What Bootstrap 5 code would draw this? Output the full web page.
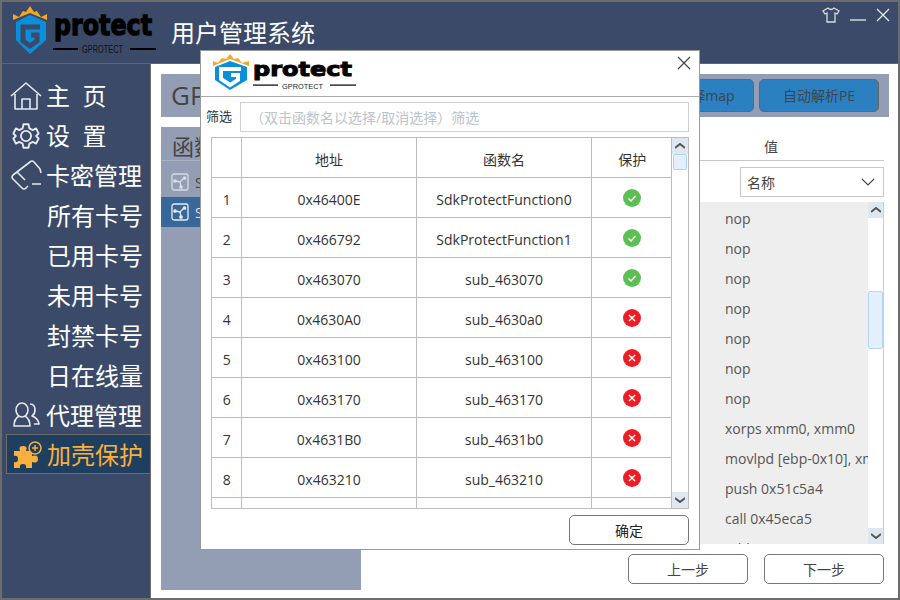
<!DOCTYPE html>
<html lang="zh">
<head>
<meta charset="utf-8">
<title>用户管理系统</title>
<link href="https://cdn.jsdelivr.net/npm/bootstrap@5.3.0/dist/css/bootstrap.min.css" rel="stylesheet">
<style>
html,body{height:100%;margin:0;overflow:hidden}
body{font-family:"Open Sans","Noto Sans CJK SC",sans-serif;background:#fff;color:#333}
.app-win{width:900px;height:600px;border:2px solid #6c6c6c;position:relative;background:#fff;overflow:hidden}
.top-bar{height:62px;background:#3a4a68;border-bottom:1px solid #5f6572;flex:none}
.brand-box{width:160px;margin-left:10px;align-self:flex-start}
.app-title{font-size:24px;color:#fff;line-height:1;margin-left:-1px}
.win-tools{margin-left:auto;padding:4px 8px 0 0;gap:10px;align-self:flex-start}
.side-nav{width:149px;background:#3a4a68;border-right:1px solid #6c6c6c;padding-top:12px;flex:none}
.nav-row{height:40px;font-size:24px;line-height:40px;color:#fff;padding-left:8px;white-space:nowrap}
.nav-row svg{flex:none;width:32px;height:32px;margin-right:4px}
.nav-row.sub-row{padding-left:45px}
.nav-row.live-row{color:#fbb03b;background:#1f3f60;border:1px solid #6c6c6c;border-right:0;margin:-2px 0 0 4px;padding-left:3px;padding-top:1px;line-height:38px}
.nav-row.live-row svg{margin-right:5px}
.main-zone{padding:10px 9px 8px 10px;min-width:0}
.head-strip{height:43px;background:#939eb5;padding:0 10px;font-size:26px;color:#444;flex:none;justify-content:space-between}
.head-strip .btn{height:33px;width:120px;padding:0;background:#2a80c0;border:1px solid #666;border-radius:5px;font-size:14px;color:#3c4650}
.head-strip .btn.narrow-btn{width:96px}
.strip-btns{gap:5px}
.lower-zone{margin-top:10px;min-height:0}
.fn-panel{width:200px;background:#939eb5;flex:none;height:463px}
.fn-head{height:34px;font-size:22px;line-height:38px;color:#444;padding-left:11px;border-bottom:1px solid #aab2c4}
.fn-item{height:30px;font-size:14px;padding-left:10px;color:#444}
.fn-item.first-item{margin-top:6px;height:30px}
.fn-item.on{background:#38689a;color:#dde}
.fn-item svg{width:18px;height:18px;margin-right:6px}
.val-col{margin-left:auto;width:256px;margin-right:5px}
.val-head{height:34px;line-height:39px;text-align:center;font-size:14px;color:#444;border-bottom:1px solid #c8c8c8;padding-left:30px}
.val-select{width:144px;height:30px;margin:6px 0 5px auto;padding:0 0 0 6px;border:1px solid #c8c8c8;border-radius:0;font-size:14px;color:#444;font-family:inherit;background-image:url("data:image/svg+xml,%3Csvg xmlns='http://www.w3.org/2000/svg' viewBox='0 0 14 8'%3E%3Cpath d='M1 1 L7 7 L13 1' fill='none' stroke='%23444' stroke-width='1.1'/%3E%3C/svg%3E");background-size:14px 8px;background-position:right 8px center}
.code-box{height:342px;background:#eee;overflow:hidden}
.code-rows{padding-left:97px;font-size:14px;color:#555;line-height:30px;margin:2px 0 0;list-style:none;white-space:nowrap;overflow:hidden}
.bar-v{width:16px;background:#fff;flex:none}
.code-box .bar-v{border-right:1px solid #ccc}
.bar-arrow{height:16px;background:#dfe8f0;color:#555;flex:none}
.bar-arrow svg{width:10px;height:6px}
.bar-track{min-height:0}
.code-box .bar-thumb{height:58px;margin-top:73px;background:#e3f0fb;border:1px solid #b3d7f5;border-radius:2px}
.step-row{margin-top:10px;gap:16px}
.step-row .btn{width:120px;height:30px;padding:0;border:1px solid #777;border-radius:5px;font-size:14px;color:#444;background:#fff}
.dlg{position:absolute;left:198px;top:48px;width:500px;height:500px;background:#fff;border:1px solid #999;z-index:5}
.dlg-head{height:46px;border-bottom:1px solid #aaa;padding-left:12px;position:relative}
.dlg-head svg.dlg-logo{align-self:flex-start;margin-top:3px}
.dlg-x{position:absolute;top:5px;right:8px;padding:0;border:0;background:none;line-height:0}
.filter-row{height:30px;margin:5px 10px 0 5px;font-size:13px;color:#333}
.filter-row .form-control{height:30px;margin-left:8px;border:1px solid #d0d0d0;border-radius:0;padding:0 0 0 9px;font-size:14px;font-family:inherit}
.filter-row .form-control::placeholder{color:#bcc3cc}
.grid-box{height:372px;margin:5px 10px 0 10px;border:1px solid #bdbdbd;overflow:hidden}
.grid-wrap{overflow:hidden;min-width:0}
.fn-table{table-layout:fixed;width:460px;margin:-1px 0 0;font-size:14px;border-color:#bdbdbd;color:#333}
.fn-table td,.fn-table th{height:40px;padding:5px 0 0 1px;text-align:center;vertical-align:middle;font-weight:400;border-color:#bdbdbd;border-width:0 1px 1px 0;color:#333}
.fn-table tr>*:last-child{border-right-width:0}
.mark-dot{width:18px;height:18px;display:block;margin:-4px auto 0}
.dlg .bar-thumb{height:16px;background:#e3f0fb;border:1px solid #a9d2f4;border-radius:2px;margin:0 1px}
.dlg .bar-v{border-left:1px solid #bdbdbd;width:17px}
.dlg-foot{margin:6px 10px 0 0}
.dlg-foot .btn{width:120px;height:30px;padding:1px 0 0;border:1px solid #777;border-radius:5px;font-size:14px;color:#222;background:#fff}
.logo-word{font-family:"DejaVu Sans",sans-serif;font-weight:700}
.logo-sub{font-family:"Liberation Sans",sans-serif}
</style>
</head>
<body>
<div class="app-win d-flex flex-column">
  <div class="top-bar d-flex align-items-center">
    <div class="brand-box">
      <svg width="150" height="60" viewBox="12 2 150 60" class="d-block">
        <path d="M13 14 L19 17 L23 11 L26 12 L30 6 L34 12 L37 11 L41 17 L47 14 L47 20 L30 13 L13 20 Z" fill="#f7a823"/>
        <path d="M16 22 L30 15 L46 22 L46 40 L30 54 L16 40 Z" fill="#0a8fdc"/>
        <path d="M40 27 L23 27 L23 41 L30 46 L37 41 L37 35 L31 35" fill="none" stroke="#3a4a68" stroke-width="5"/>
        <text x="54" y="35" class="logo-word" font-size="29" textLength="98" lengthAdjust="spacingAndGlyphs" fill="#000" stroke="#000" stroke-width="1.3">protect</text>
        <rect x="53" y="48" width="25" height="2" fill="#000"/>
        <text x="82" y="53" class="logo-sub" font-size="10" textLength="41" lengthAdjust="spacingAndGlyphs" fill="#111">GPROTECT</text>
        <rect x="130" y="48" width="26" height="2" fill="#000"/>
      </svg>
    </div>
    <div class="app-title">用户管理系统</div>
    <div class="win-tools d-flex align-items-center">
      <svg width="18" height="18" viewBox="0 0 18 18" fill="none" stroke="#d5dae3" stroke-width="1.3"><path d="M6 2 L1 5 L3 8 L5 7 L5 16 L13 16 L13 7 L15 8 L17 5 L12 2 Q9 5 6 2 Z"/></svg>
      <svg width="16" height="16" viewBox="0 0 16 16" stroke="#e8ebf0" stroke-width="1.3"><path d="M0 13 H16"/></svg>
      <svg width="14" height="14" viewBox="0 0 14 14" stroke="#e8ebf0" stroke-width="1.3"><path d="M1 1 L13 13 M13 1 L1 13"/></svg>
    </div>
  </div>
  <div class="d-flex flex-grow-1 overflow-hidden">
    <nav class="side-nav">
      <div class="nav-row d-flex align-items-center">
        <svg viewBox="0 0 32 32" fill="none" stroke="#e6e9ef" stroke-width="1.6"><path d="M1 16 L16 3 L31 16 M5 14 V29 H27 V14 M12 29 V19 H20 V29" stroke-linejoin="round"/></svg>主&nbsp;&nbsp;页</div>
      <div class="nav-row d-flex align-items-center">
        <svg viewBox="-3 -3 38 38" fill="none" stroke="#e6e9ef" stroke-width="2.2"><circle cx="16" cy="16" r="6"/><path d="M13 2 H19 L20 7 L24 9 L28 7 L31 13 L28 16 L31 19 L28 25 L24 23 L20 25 L19 30 H13 L12 25 L8 23 L4 25 L1 19 L4 16 L1 13 L4 7 L8 9 L12 7 Z" stroke-linejoin="round"/></svg>设&nbsp;&nbsp;置</div>
      <div class="nav-row d-flex align-items-center">
        <svg viewBox="0 0 32 32" fill="none" stroke="#e6e9ef" stroke-width="1.6" stroke-linejoin="round"><path d="M31 13 L30 9 L24 2 Q22 0 20 2 L3 15 Q1 17 3 19 L12 28 Q14 30 16 28 L18 26 M7 12 L15 20 M22 24 H31"/></svg>卡密管理</div>
      <div class="nav-row sub-row">所有卡号</div>
      <div class="nav-row sub-row">已用卡号</div>
      <div class="nav-row sub-row">未用卡号</div>
      <div class="nav-row sub-row">封禁卡号</div>
      <div class="nav-row sub-row">日在线量</div>
      <div class="nav-row d-flex align-items-center">
        <svg viewBox="0 0 32 32" fill="none" stroke="#e6e9ef" stroke-width="1.6" stroke-linejoin="round"><ellipse cx="12" cy="10" rx="6" ry="7"/><path d="M9 16 Q4 19 4 26 H20 Q20 19 15 16 M20 4 Q25 4 25 10 Q25 14 22 16 Q28 18 29 24 H24"/></svg>代理管理</div>
      <div class="nav-row live-row d-flex align-items-center">
        <svg viewBox="0 0 32 32"><path fill="#fbb03b" transform="translate(0 2)" d="M4 10 H10 Q8 5 13 5 Q18 5 16 10 H22 V15 Q28 13 28 18 Q28 23 22 21 V27 H16 Q17 23 13 23 Q9 23 10 27 H4 V21 Q8 22 8 18 Q8 14 4 15 Z"/><circle cx="25" cy="9" r="6" fill="#1f3f60" stroke="#fbb03b" stroke-width="1.5"/><path d="M22 9 H28 M25 6 V12" stroke="#fbb03b" stroke-width="1.5"/></svg>加壳保护</div>
    </nav>
    <main class="main-zone flex-grow-1 d-flex flex-column">
      <div class="head-strip d-flex align-items-center">
        <span>GProtect</span>
        <div class="strip-btns d-flex">
          <button class="btn narrow-btn" type="button">选择map</button>
          <button class="btn" type="button">自动解析PE</button>
        </div>
      </div>
      <div class="lower-zone d-flex flex-grow-1">
        <div class="fn-panel">
          <div class="fn-head">函数列表</div>
          <div class="fn-item first-item d-flex align-items-center">
            <svg viewBox="0 0 18 18" fill="none" stroke="#d8dde6" stroke-width="1.3"><rect x="1" y="1" width="16" height="16" rx="2"/><path d="M9 9 L4.5 8 M9 9 L13 5 M9 9 L10 13.5"/><circle cx="4" cy="8" r="1.2" fill="#d8dde6"/><circle cx="13.5" cy="5" r="1.2" fill="#d8dde6"/><circle cx="10" cy="14" r="1.2" fill="#d8dde6"/></svg>SdkProtect</div>
          <div class="fn-item on d-flex align-items-center">
            <svg viewBox="0 0 18 18" fill="none" stroke="#e6ebf3" stroke-width="1.3"><rect x="1" y="1" width="16" height="16" rx="2"/><path d="M9 9 L4.5 8 M9 9 L13 5 M9 9 L10 13.5"/><circle cx="4" cy="8" r="1.2" fill="#e6ebf3"/><circle cx="13.5" cy="5" r="1.2" fill="#e6ebf3"/><circle cx="10" cy="14" r="1.2" fill="#e6ebf3"/></svg>SdkProtect</div>
        </div>
        <div class="val-col">
          <div class="val-head">值</div>
          <select class="form-select val-select"><option>名称</option></select>
          <div class="code-box d-flex">
            <ul class="code-rows flex-grow-1">
              <li>nop</li><li>nop</li><li>nop</li><li>nop</li><li>nop</li><li>nop</li><li>nop</li>
              <li>xorps xmm0, xmm0</li><li>movlpd [ebp-0x10], xmm0</li><li>push 0x51c5a4</li><li>call 0x45eca5</li><li>add esp, 0x4</li>
            </ul>
            <div class="bar-v d-flex flex-column">
              <div class="bar-arrow d-flex align-items-center justify-content-center"><svg viewBox="0 0 10 6"><path d="M0 5 L5 1 L10 5" fill="none" stroke="#555" stroke-width="2"/></svg></div>
              <div class="bar-track flex-grow-1"><div class="bar-thumb"></div></div>
              <div class="bar-arrow d-flex align-items-center justify-content-center"><svg viewBox="0 0 10 6"><path d="M0 1 L5 5 L10 1" fill="none" stroke="#555" stroke-width="2"/></svg></div>
            </div>
          </div>
          <div class="step-row d-flex">
            <button class="btn" type="button">上一步</button>
            <button class="btn" type="button">下一步</button>
          </div>
        </div>
      </div>
    </main>
  </div>

  <div class="dlg">
    <div class="dlg-head d-flex align-items-center">
      <svg class="dlg-logo d-block" width="146" height="40" viewBox="213 54 146 40">
        <path d="M213 61 L218 63 L222 58 L226 59 L230 54 L234 59 L238 58 L242 63 L249 61 L249 66 L230 59 L213 66 Z" fill="#f7a823"/>
        <path d="M215 67 L230 61 L247 67 L247 80 L230 90 L215 80 Z" fill="#0a8fdc"/>
        <path d="M241 69 L221 69 L221 79 L230 85 L238 80 L238 75 L231 75" fill="none" stroke="#fff" stroke-width="4"/>
        <text x="253" y="76" class="logo-word" font-size="20" textLength="99" lengthAdjust="spacingAndGlyphs" fill="#000" stroke="#000" stroke-width="1">protect</text>
        <rect x="253" y="84.5" width="25" height="1.2" fill="#000"/>
        <text x="282" y="89" class="logo-sub" font-size="8" textLength="41" lengthAdjust="spacingAndGlyphs" fill="#222">GPROTECT</text>
        <rect x="330" y="84.5" width="26" height="1.2" fill="#000"/>
      </svg>
      <button class="dlg-x" type="button" aria-label="关闭"><svg width="14" height="14" viewBox="0 0 14 14" stroke="#444" stroke-width="1.2"><path d="M1 1 L13 13 M13 1 L1 13"/></svg></button>
    </div>
    <div class="filter-row d-flex align-items-center">
      <span class="text-nowrap">筛选</span>
      <input class="form-control" type="text" placeholder="（双击函数名以选择/取消选择）筛选">
    </div>
    <div class="grid-box d-flex">
      <div class="grid-wrap flex-grow-1">
        <table class="table fn-table">
          <colgroup><col style="width:29px"><col style="width:175px"><col style="width:175px"><col style="width:81px"></colgroup>
          <thead><tr><th></th><th>地址</th><th>函数名</th><th>保护</th></tr></thead>
          <tbody>
            <tr><td>1</td><td>0x46400E</td><td>SdkProtectFunction0</td><td><svg class="mark-dot" viewBox="0 0 18 18"><circle cx="9" cy="9" r="9" fill="#5cbf54"/><path d="M5.5 9.5 L8 12 L12.5 7" fill="none" stroke="#fff" stroke-width="1.3"/></svg></td></tr>
            <tr><td>2</td><td>0x466792</td><td>SdkProtectFunction1</td><td><svg class="mark-dot" viewBox="0 0 18 18"><circle cx="9" cy="9" r="9" fill="#5cbf54"/><path d="M5.5 9.5 L8 12 L12.5 7" fill="none" stroke="#fff" stroke-width="1.3"/></svg></td></tr>
            <tr><td>3</td><td>0x463070</td><td>sub_463070</td><td><svg class="mark-dot" viewBox="0 0 18 18"><circle cx="9" cy="9" r="9" fill="#5cbf54"/><path d="M5.5 9.5 L8 12 L12.5 7" fill="none" stroke="#fff" stroke-width="1.3"/></svg></td></tr>
            <tr><td>4</td><td>0x4630A0</td><td>sub_4630a0</td><td><svg class="mark-dot" viewBox="0 0 18 18"><circle cx="9" cy="9" r="9" fill="#ee1c25"/><path d="M6 6 L12 12 M12 6 L6 12" stroke="#fff" stroke-width="1.5"/></svg></td></tr>
            <tr><td>5</td><td>0x463100</td><td>sub_463100</td><td><svg class="mark-dot" viewBox="0 0 18 18"><circle cx="9" cy="9" r="9" fill="#ee1c25"/><path d="M6 6 L12 12 M12 6 L6 12" stroke="#fff" stroke-width="1.5"/></svg></td></tr>
            <tr><td>6</td><td>0x463170</td><td>sub_463170</td><td><svg class="mark-dot" viewBox="0 0 18 18"><circle cx="9" cy="9" r="9" fill="#ee1c25"/><path d="M6 6 L12 12 M12 6 L6 12" stroke="#fff" stroke-width="1.5"/></svg></td></tr>
            <tr><td>7</td><td>0x4631B0</td><td>sub_4631b0</td><td><svg class="mark-dot" viewBox="0 0 18 18"><circle cx="9" cy="9" r="9" fill="#ee1c25"/><path d="M6 6 L12 12 M12 6 L6 12" stroke="#fff" stroke-width="1.5"/></svg></td></tr>
            <tr><td>8</td><td>0x463210</td><td>sub_463210</td><td><svg class="mark-dot" viewBox="0 0 18 18"><circle cx="9" cy="9" r="9" fill="#ee1c25"/><path d="M6 6 L12 12 M12 6 L6 12" stroke="#fff" stroke-width="1.5"/></svg></td></tr>
            <tr><td></td><td></td><td></td><td></td></tr>
          </tbody>
        </table>
      </div>
      <div class="bar-v d-flex flex-column">
        <div class="bar-arrow d-flex align-items-center justify-content-center"><svg viewBox="0 0 10 6"><path d="M0 5 L5 1 L10 5" fill="none" stroke="#555" stroke-width="2"/></svg></div>
        <div class="bar-thumb"></div>
        <div class="flex-grow-1"></div>
        <div class="bar-arrow d-flex align-items-center justify-content-center"><svg viewBox="0 0 10 6"><path d="M0 1 L5 5 L10 1" fill="none" stroke="#555" stroke-width="2"/></svg></div>
      </div>
    </div>
    <div class="dlg-foot d-flex justify-content-end"><button class="btn" type="button">确定</button></div>
  </div>
</div>
<script src="https://cdn.jsdelivr.net/npm/bootstrap@5.3.0/dist/js/bootstrap.bundle.min.js"></script>
</body>
</html>
